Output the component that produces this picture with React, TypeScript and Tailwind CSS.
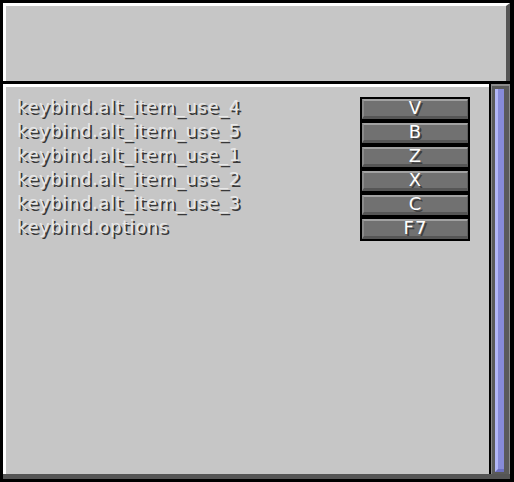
import React from 'react';

// Keybind rows shown in the list
const binds = [
  { name: 'keybind.alt_item_use_4', key: 'V' },
  { name: 'keybind.alt_item_use_5', key: 'B' },
  { name: 'keybind.alt_item_use_1', key: 'Z' },
  { name: 'keybind.alt_item_use_2', key: 'X' },
  { name: 'keybind.alt_item_use_3', key: 'C' },
  { name: 'keybind.options', key: 'F7' },
];

function KeyButton({ label }: { label: string }) {
  return (
    <div className="w-[110px] h-[24px] border-2 border-black flex">
      <div className="flex-1 flex items-center justify-center bg-[#717171] border-t-2 border-t-[#a2a2a2] border-l-2 border-l-[#8a8a8a] border-b-[3px] border-b-[#565656] border-r border-r-[#5e5e5e]">
        <span className="text-white text-[18px] leading-none tracking-[1px] -mt-[1px] [text-shadow:2px_2px_0_#3f3f3f]">
          {label}
        </span>
      </div>
    </div>
  );
}

export default function App() {
  return (
    <div className="w-[514px] h-[482px] bg-black flex flex-col pt-[3px] pl-[3px] pr-[4px] pb-[3px] font-['DejaVu_Sans',sans-serif]">
      {/* Header */}
      <div className="h-[78px] shrink-0 bg-[#c6c6c6] border-t-[3px] border-l-[3px] border-white border-r-[4px] border-r-[#555555]" />

      {/* divider */}
      <div className="h-[3px] shrink-0" />

      {/* List + scrollbar */}
      <div className="flex-1 flex border-b-[5px] border-[#555555]">
        <div className="flex-1 bg-[#c6c6c6] border-t-[3px] border-l-[3px] border-white pl-[11px] pr-[19px] pt-[10px]">
          {binds.map(b => (
            <div key={b.name} className="h-[24px] flex items-center justify-between">
              <span className="text-[#e8e8e8] text-[18px] leading-none tracking-[0.6px] -mt-[4px] [text-shadow:2px_2px_0_#383838]">
                {b.name}
              </span>
              <KeyButton label={b.key} />
            </div>
          ))}
        </div>

        {/* Scrollbar */}
        <div className="w-[21px] border-l-2 border-black bg-[#8b8b8b] flex pl-[1px] pr-[1px] pt-[2px]">
          <div className="flex-1 flex border-[3px] border-[#5a5a5a] border-r-[5px] border-b-[2px]">
            <div className="flex-1 bg-[#878bd8] border-l-[3px] border-l-[#b2b6f6] border-b-[3px] border-b-[#6b6fc2]" />
          </div>
        </div>
      </div>
    </div>
  );
}
